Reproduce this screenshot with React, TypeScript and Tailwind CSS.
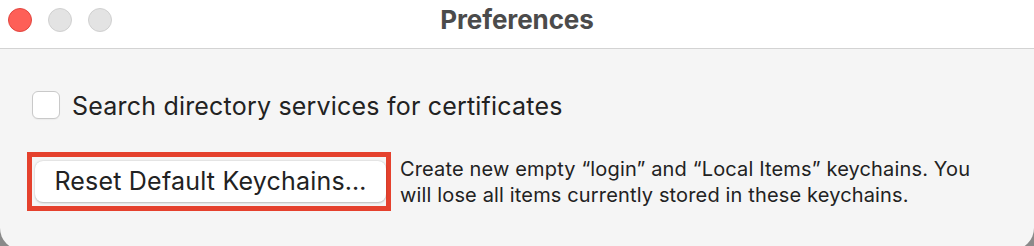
const font = { fontFamily: "Inter, 'Noto Sans', sans-serif" };

function TrafficLights() {
  return (
    <div className="flex items-center gap-[16px] pl-[8px]">
      <span className="block h-[24px] w-[24px] rounded-full border border-[#e2463f] bg-[#fe5f57]" />
      <span className="block h-[24px] w-[24px] rounded-full border border-[#d0d0d0] bg-[#e3e3e3]" />
      <span className="block h-[24px] w-[24px] rounded-full border border-[#d0d0d0] bg-[#e3e3e3]" />
    </div>
  );
}

export default function App() {
  return (
    <div className="h-[246px] w-[1034px] overflow-hidden bg-[#8a8a8a]" style={font}>
      <div className="flex h-[250px] flex-col overflow-hidden rounded-b-[22px] bg-[#f5f5f5]">
        <header className="relative flex h-[49px] shrink-0 items-center border-b border-[#d3d3d3] bg-white">
          <div className="-mt-[9px]">
            <TrafficLights />
          </div>
          <h1 className="absolute inset-x-0 top-[3px] text-center text-[26px] font-bold leading-[34px] tracking-[-0.1px] text-[#4b4b4b]">
            Preferences
          </h1>
        </header>

        <main className="flex flex-col pl-[27px] pt-[41px]">
          <label className="flex items-center gap-[12px] pl-[5px]">
            <span className="block h-[28px] w-[28px] rounded-[6px] border border-[#c9c9c9] bg-white shadow-[0_1px_1px_rgba(0,0,0,0.04)]" />
            <span className="mt-[2px] text-[25px] leading-[28px] tracking-[0.2px] text-[#222]">
              Search directory services for certificates
            </span>
          </label>

          <div className="mt-[32px] flex items-center gap-[9px]">
            <div className="border-[5px] border-[#e5412d] pb-[4px] pl-[3px] pr-[0px] pt-[4px]">
              <button className="h-[41px] w-[351px] rounded-[8px] bg-white text-[25px] tracking-[0.2px] text-[#222] shadow-[0_0.5px_2px_rgba(0,0,0,0.25)]">
                Reset Default Keychains…
              </button>
            </div>
            <p className="text-[20px] leading-[26px] tracking-[0.15px] text-[#222]">
              Create new empty “login” and “Local Items” keychains. You
              <br />
              will lose all items currently stored in these keychains.
            </p>
          </div>
        </main>
      </div>
    </div>
  );
}
